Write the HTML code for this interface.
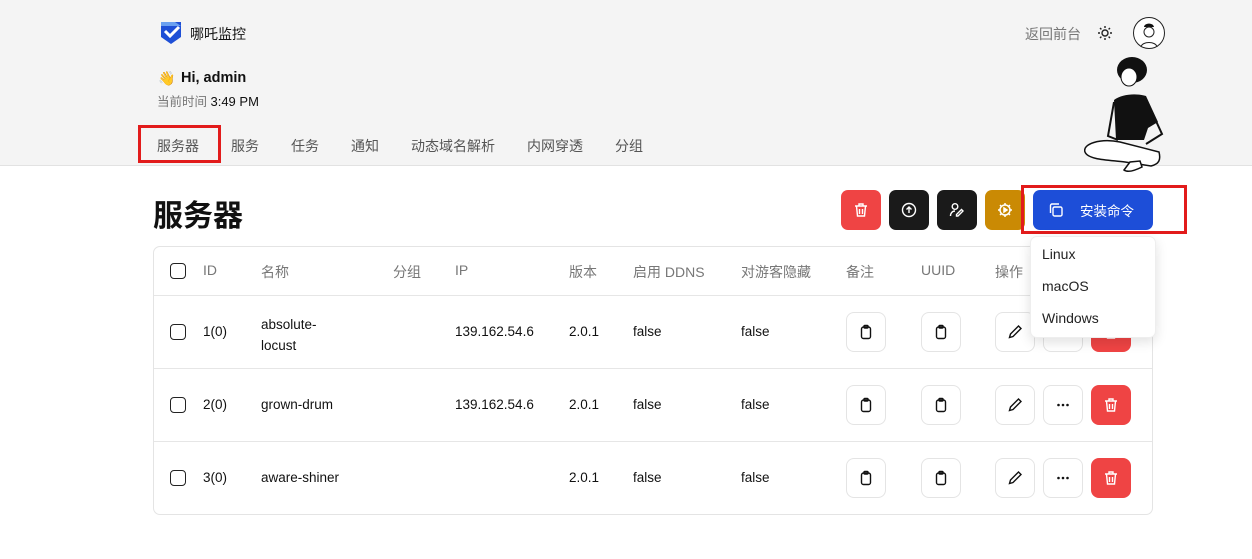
<!DOCTYPE html>
<html><head><meta charset="utf-8"><style>
*{margin:0;padding:0;box-sizing:border-box}
body{width:1252px;height:559px;background:#fff;position:relative;overflow:hidden;font-family:"Liberation Sans","Noto Sans CJK SC",sans-serif;color:#111}
.a{position:absolute;white-space:nowrap}
.hdr{position:absolute;left:0;top:0;width:1252px;height:166px;background:#f4f4f4;border-bottom:1px solid #e2e2e2}
.tab{position:absolute;top:136px;font-size:14px;color:#555}
.tb{position:absolute;top:190px;width:40px;height:40px;border-radius:7px;display:flex;align-items:center;justify-content:center}
.tbl{position:absolute;left:153px;top:246px;width:1000px;height:269px;border:1px solid #e4e4e4;border-radius:7px}
.line{position:absolute;left:154px;width:998px;height:1px;background:#e6e6e6}
.th{position:absolute;top:262px;font-size:14px;color:#777}
.td{position:absolute;font-size:13.5px;color:#111}
.cb{position:absolute;left:170px;width:16px;height:16px;border:1.5px solid #222;border-radius:4px}
.ib{position:absolute;width:40px;height:40px;border:1px solid #e4e4e4;border-radius:8px;background:#fff;display:flex;align-items:center;justify-content:center}
.del{background:#ef4444;border:none}
</style></head><body>
<div class="hdr"></div>
<svg class="a" style="left:160px;top:21px" width="22" height="24" viewBox="0 0 22 24"><path d="M1 1h20v15l-10 7-10-7z" fill="#1e4fd6"/><path d="M1 1h14l6 4v0H1z" fill="#6aa0f0"/><path d="M5 10l5 5 9-9" stroke="#fff" stroke-width="3" fill="none"/></svg>
<div class="a" style="left:190px;top:24px;font-size:14px">哪吒监控</div>
<div class="a" style="left:1025px;top:24px;font-size:14px;color:#777">返回前台</div>
<svg class="a" style="left:1097px;top:25px" width="16" height="16" viewBox="0 0 16 16" stroke="#222" stroke-width="1.4" fill="none"><circle cx="8" cy="8" r="3"/><path d="M8 1v2M8 13v2M1 8h2M13 8h2M3 3l1.4 1.4M11.6 11.6L13 13M3 13l1.4-1.4M11.6 4.4L13 3"/></svg>
<div class="a" style="left:1133px;top:17px;width:32px;height:32px;border:1.5px solid #222;border-radius:50%;background:#fff"></div>
<svg class="a" style="left:1139px;top:21px" width="20" height="26" viewBox="0 0 20 26"><path d="M5 6c0-4 9-5 10 0" fill="#111"/><circle cx="10" cy="11" r="5" fill="none" stroke="#222"/><path d="M2 26c1-6 15-6 16 0" fill="none" stroke="#222"/></svg>
<svg class="a" style="left:1084px;top:56px" width="84" height="120" viewBox="0 0 84 120"><ellipse cx="48" cy="14" rx="15" ry="13" fill="#111"/><ellipse cx="45" cy="21" rx="8" ry="9" fill="#fff" stroke="#111"/><path d="M30 44c8-6 22-7 32-4l12 26-10 6-4 12-28 0z" fill="#111"/><path d="M30 46l-6 34 10 4 M66 52l12 26-16 10" fill="none" stroke="#111" stroke-width="2"/><path d="M36 86c-20-4-38 2-35 10 3 8 25 8 40 10l26 4c8-2 10-6 8-14 z" fill="#fff" stroke="#111" stroke-width="1.5"/><path d="M46 106l-6 8c4 3 12 0 18-3l-2-6z" fill="#fff" stroke="#111" stroke-width="1.5"/></svg>
<div class="a" style="left:158px;top:70px;font-size:14px">👋</div>
<div class="a" style="left:181px;top:70px;font-size:14.5px;font-weight:bold">Hi, admin</div>
<div class="a" style="left:157px;top:91px;font-size:12.5px;color:#777">当前时间 <span style="color:#111;font-size:13px">3:49 PM</span></div>
<div class="tab" style="left:157px">服务器</div>
<div class="tab" style="left:231px">服务</div>
<div class="tab" style="left:291px">任务</div>
<div class="tab" style="left:351px">通知</div>
<div class="tab" style="left:411px">动态域名解析</div>
<div class="tab" style="left:527px">内网穿透</div>
<div class="tab" style="left:615px">分组</div>
<div class="a" style="left:138px;top:125px;width:83px;height:38px;border:3px solid #e21b1b"></div>
<div class="a" style="left:153px;top:191px;font-size:30px;font-weight:bold">服务器</div>
<div class="tb" style="left:841px;background:#ef4444"><svg width="16" height="16" viewBox="0 0 16 16" stroke="#fff" stroke-width="1.4" fill="none"><path d="M2 4h12M6 4V2h4v2M3.5 4l1 10h7l1-10M6.5 7v5M9.5 7v5"/></svg></div>
<div class="tb" style="left:889px;background:#1a1a1a"><svg width="16" height="16" viewBox="0 0 16 16" stroke="#fff" stroke-width="1.4" fill="none"><circle cx="8" cy="8" r="6.5"/><path d="M8 11V5M5.5 7.5L8 5l2.5 2.5"/></svg></div>
<div class="tb" style="left:937px;background:#1a1a1a"><svg width="16" height="16" viewBox="0 0 16 16" stroke="#fff" stroke-width="1.4" fill="none"><circle cx="6" cy="4.5" r="2.8"/><path d="M1.5 14c0-3 2-5 4.5-5M9 14l5-5-1.5-1.5-5 5V14z"/></svg></div>
<div class="tb" style="left:985px;background:#ca8a04"><svg width="16" height="16" viewBox="0 0 16 16" stroke="#fff" stroke-width="1.5" fill="none"><circle cx="8" cy="8" r="5"/><path d="M8 1v2M8 13v2M1 8h2M13 8h2M3 3l1.4 1.4M11.6 11.6L13 13M3 13l1.4-1.4M11.6 4.4L13 3"/><path d="M7 6v4l3-2z" fill="#fff"/></svg></div>
<div class="tb" style="left:1033px;width:120px;background:#1d4ed8;justify-content:flex-start;padding-left:15px"><svg width="16" height="16" viewBox="0 0 16 16" stroke="#fff" stroke-width="1.4" fill="none"><rect x="5" y="5" width="9" height="9" rx="1.5"/><path d="M2.5 11V3.5A1.5 1.5 0 0 1 4 2h7"/></svg><span style="color:#fff;font-size:13.5px;margin-left:16px">安装命令</span></div>
<div class="a" style="left:1021px;top:185px;width:166px;height:49px;border:3px solid #e21b1b"></div>
<div class="tbl"></div>
<div class="line" style="top:295px"></div>
<div class="line" style="top:368px"></div>
<div class="line" style="top:441px"></div>
<div class="cb" style="top:263px"></div>
<div class="th" style="left:203px">ID</div><div class="th" style="left:261px">名称</div><div class="th" style="left:393px">分组</div><div class="th" style="left:455px">IP</div><div class="th" style="left:569px">版本</div><div class="th" style="left:633px">启用 DDNS</div><div class="th" style="left:741px">对游客隐藏</div><div class="th" style="left:846px">备注</div><div class="th" style="left:921px">UUID</div><div class="th" style="left:995px">操作</div>

<div class="cb" style="top:324px"></div>
<div class="td" style="left:203px;top:324px">1(0)</div>
<div class="td" style="left:261px;top:314px;line-height:21px">absolute-<br>locust</div>
<div class="td" style="left:455px;top:324px">139.162.54.6</div><div class="td" style="left:569px;top:324px">2.0.1</div><div class="td" style="left:633px;top:324px">false</div><div class="td" style="left:741px;top:324px">false</div>

<div class="cb" style="top:397px"></div>
<div class="td" style="left:203px;top:397px">2(0)</div><div class="td" style="left:261px;top:397px">grown-drum</div>
<div class="td" style="left:455px;top:397px">139.162.54.6</div><div class="td" style="left:569px;top:397px">2.0.1</div><div class="td" style="left:633px;top:397px">false</div><div class="td" style="left:741px;top:397px">false</div>

<div class="cb" style="top:470px"></div>
<div class="td" style="left:203px;top:470px">3(0)</div><div class="td" style="left:261px;top:470px">aware-shiner</div>
<div class="td" style="left:569px;top:470px">2.0.1</div><div class="td" style="left:633px;top:470px">false</div><div class="td" style="left:741px;top:470px">false</div>

<div id="btns"></div>
<script>
var clip='<svg width="16" height="16" viewBox="0 0 16 16" stroke="#111" stroke-width="1.4" fill="none"><rect x="3.5" y="3" width="9" height="11.5" rx="2"/><rect x="6" y="1.5" width="4" height="2.5" rx="0.8"/></svg>';
var pen='<svg width="16" height="16" viewBox="0 0 16 16" stroke="#111" stroke-width="1.4" fill="none"><path d="M2.5 13.5l1-3.5 8-8 2.5 2.5-8 8z"/></svg>';
var dots='<svg width="16" height="16" viewBox="0 0 16 16" fill="#111"><circle cx="3.5" cy="8" r="1.3"/><circle cx="8" cy="8" r="1.3"/><circle cx="12.5" cy="8" r="1.3"/></svg>';
var tr='<svg width="16" height="16" viewBox="0 0 16 16" stroke="#fff" stroke-width="1.4" fill="none"><path d="M2 4h12M6 4V2h4v2M3.5 4l1 10h7l1-10M6.5 7v5M9.5 7v5"/></svg>';
var h='';[312,385,458].forEach(function(y){
h+='<div class="ib" style="left:846px;top:'+y+'px">'+clip+'</div>';
h+='<div class="ib" style="left:921px;top:'+y+'px">'+clip+'</div>';
h+='<div class="ib" style="left:995px;top:'+y+'px">'+pen+'</div>';
h+='<div class="ib" style="left:1043px;top:'+y+'px">'+dots+'</div>';
h+='<div class="ib del" style="left:1091px;top:'+y+'px">'+tr+'</div>';});
document.getElementById('btns').innerHTML=h;
</script>
<div class="a" style="left:1030px;top:236px;width:126px;height:102px;background:#fff;border:1px solid #eee;border-radius:7px;box-shadow:0 4px 12px rgba(0,0,0,.12);z-index:5">
<div style="position:absolute;left:11px;top:9px;font-size:14px;color:#222">Linux</div>
<div style="position:absolute;left:11px;top:41px;font-size:14px;color:#222">macOS</div>
<div style="position:absolute;left:11px;top:73px;font-size:14px;color:#222">Windows</div>
</div>
</body></html>
